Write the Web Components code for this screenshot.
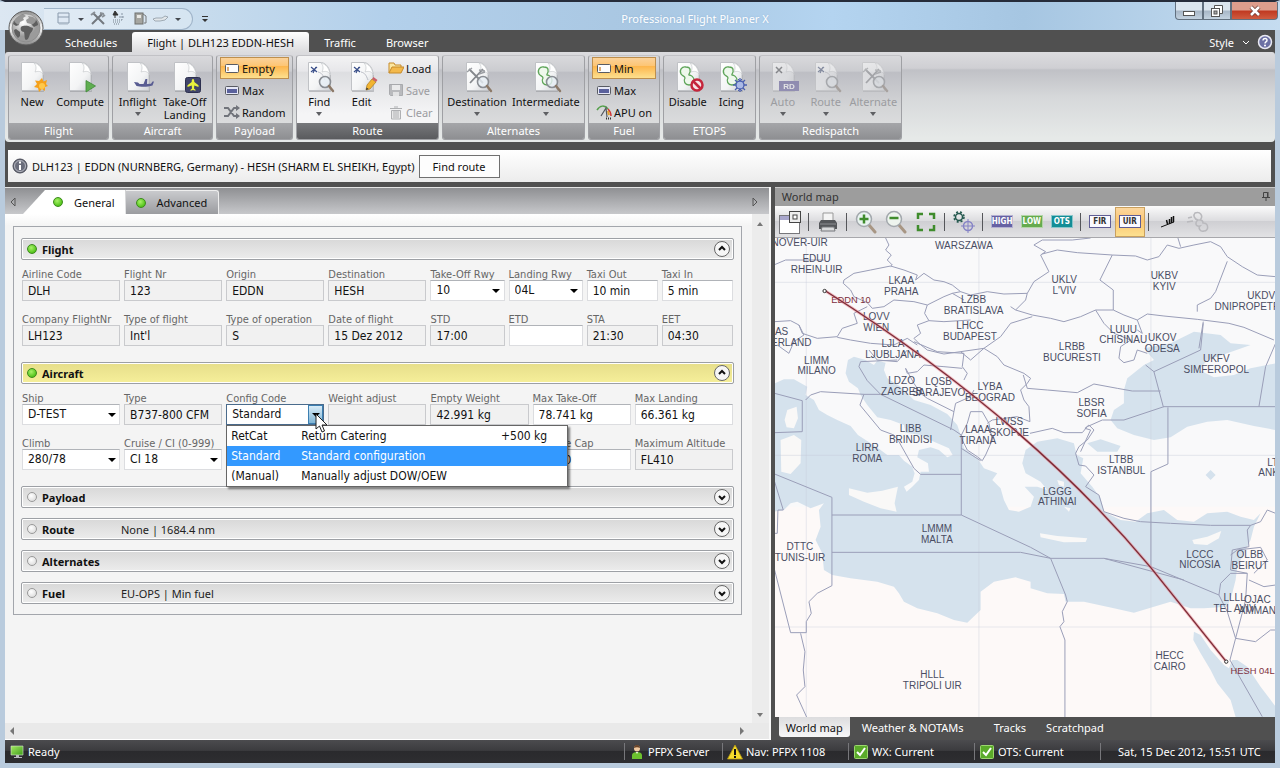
<!DOCTYPE html>
<html lang="en">
<head>
<meta charset="utf-8">
<title>Professional Flight Planner X</title>
<style>
    html, body { height: 100%; margin: 0; }
    body {
        font: 11px/13px "Noto Sans", "Open Sans", sans-serif;
        color: #111;
        background: #505050;
        overflow: hidden;
        --form-font: "DejaVu Sans Condensed", "DejaVu Sans", sans-serif;
        --dark: #505050;
    }
    ribbon-group.w-s { width: 77px; }
    ribbon-group.w-m { width: 101px; }
    ribbon-group.w-l { width: 143px; }
</style>
</head>
<body>
<planner-window>
    <title-bar slot="title">Professional Flight Planner X</title-bar>
    <ribbon-tabs slot="tabs"></ribbon-tabs>

    <ribbon-bar slot="ribbon">
        <ribbon-group class="w-m" caption="Flight">
            <ribbon-button large icon="new">New</ribbon-button>
            <ribbon-button large icon="compute">Compute</ribbon-button>
        </ribbon-group>
        <ribbon-group class="w-m" caption="Aircraft">
            <ribbon-button large menu icon="inflight">Inflight</ribbon-button>
            <ribbon-button large icon="takeoff">Take-Off<br>Landing</ribbon-button>
        </ribbon-group>
        <ribbon-group class="w-s" caption="Payload" stacked>
            <ribbon-button active icon="empty">Empty</ribbon-button>
            <ribbon-button icon="max">Max</ribbon-button>
            <ribbon-button icon="random">Random</ribbon-button>
        </ribbon-group>
        <ribbon-group class="w-l" caption="Route" current>
            <ribbon-button large menu icon="find">Find</ribbon-button>
            <ribbon-button large icon="edit">Edit</ribbon-button>
            <div>
                <ribbon-button icon="load">Load</ribbon-button>
                <ribbon-button disabled icon="save">Save</ribbon-button>
                <ribbon-button disabled icon="clear">Clear</ribbon-button>
            </div>
        </ribbon-group>
        <ribbon-group class="w-l" caption="Alternates">
            <ribbon-button large menu icon="destination">Destination</ribbon-button>
            <ribbon-button large menu icon="intermediate">Intermediate</ribbon-button>
        </ribbon-group>
        <ribbon-group style="width: 72px" caption="Fuel" stacked>
            <ribbon-button active icon="empty">Min</ribbon-button>
            <ribbon-button icon="max">Max</ribbon-button>
            <ribbon-button icon="apu">APU on</ribbon-button>
        </ribbon-group>
        <ribbon-group style="width: 93px" caption="ETOPS">
            <ribbon-button large icon="disable">Disable</ribbon-button>
            <ribbon-button large icon="icing">Icing</ribbon-button>
        </ribbon-group>
        <ribbon-group class="w-l" caption="Redispatch">
            <ribbon-button large menu disabled icon="auto">Auto</ribbon-button>
            <ribbon-button large menu disabled icon="find">Route</ribbon-button>
            <ribbon-button large menu disabled icon="destination">Alternate</ribbon-button>
        </ribbon-group>
    </ribbon-bar>

    <route-bar slot="info">DLH123 | EDDN (NURNBERG, Germany) - HESH (SHARM EL SHEIKH, Egypt)</route-bar>

    <planner-pane slot="planner">
        <form-section heading="Flight" complete open columns="98fr 98fr 98fr 98fr 74fr 74fr 71fr 71fr">
            <form-field label="Airline Code" value="DLH" readonly></form-field>
            <form-field label="Flight Nr" value="123" readonly></form-field>
            <form-field label="Origin" value="EDDN" readonly></form-field>
            <form-field label="Destination" value="HESH" readonly></form-field>
            <form-field label="Take-Off Rwy" value="10" select></form-field>
            <form-field label="Landing Rwy" value="04L" select></form-field>
            <form-field label="Taxi Out" value="10 min"></form-field>
            <form-field label="Taxi In" value="5 min"></form-field>
            <form-field label="Company FlightNr" value="LH123" readonly></form-field>
            <form-field label="Type of flight" value="Int'l" readonly></form-field>
            <form-field label="Type of operation" value="S" readonly></form-field>
            <form-field label="Date of flight" value="15 Dez 2012" readonly></form-field>
            <form-field label="STD" value="17:00" readonly></form-field>
            <form-field label="ETD" value=""></form-field>
            <form-field label="STA" value="21:30" readonly></form-field>
            <form-field label="EET" value="04:30" readonly></form-field>
        </form-section>
        <form-section heading="Aircraft" complete open current columns="repeat(7, 1fr)">
            <form-field label="Ship" value="D-TEST" select></form-field>
            <form-field label="Type" value="B737-800 CFM" readonly></form-field>
            <form-field label="Config Code" value="Standard" select expanded>
                <config-menu></config-menu>
            </form-field>
            <form-field label="Weight adjust" value="" readonly></form-field>
            <form-field label="Empty Weight" value="42.991 kg" readonly></form-field>
            <form-field label="Max Take-Off" value="78.741 kg"></form-field>
            <form-field label="Max Landing" value="66.361 kg"></form-field>
            <form-field label="Climb" value="280/78" select></form-field>
            <form-field label="Cruise / CI (0-999)" value="CI 18" select></form-field>
            <form-field style="grid-column: 6" label="Altitude Cap" value="FL410"></form-field>
            <form-field label="Maximum Altitude" value="FL410" readonly></form-field>
        </form-section>
        <form-section heading="Payload"></form-section>
        <form-section heading="Route" summary="None | 1684.4 nm"></form-section>
        <form-section heading="Alternates"></form-section>
        <form-section heading="Fuel" summary="EU-OPS | Min fuel"></form-section>
    </planner-pane>

    <map-pane slot="map">
        <map-toolbar></map-toolbar>
        <world-map></world-map>
    </map-pane>

    <status-bar slot="status">
        <status-item icon="monitor" class="grow">Ready</status-item>
        <status-item icon="person" divided style="width: 98px">PFPX Server</status-item>
        <status-item icon="warning" divided style="width: 126px">Nav: PFPX 1108</status-item>
        <status-item icon="check" divided style="width: 126px">WX: Current</status-item>
        <status-item icon="check" divided style="width: 126px">OTS: Current</status-item>
        <status-item divided style="width: 175px">Sat, 15 Dec 2012, 15:51 UTC</status-item>
    </status-bar>
</planner-window>

<script>
/* Shared pieces of the 32x32 ribbon icons. */
const PAGE = `
    <defs><linearGradient id="pg" x1="0" y1="0" x2="1" y2="1">
        <stop offset="0" stop-color="#fff"/><stop offset=".6" stop-color="#f3f4f5"/><stop offset="1" stop-color="#cfd2d6"/>
    </linearGradient></defs>
    <path d="M6 30.500h21.500V14" fill="none" stroke="#8d8f93" opacity=".5"/>
    <path d="M5.500 1.500h13c5 1 8.500 6 8.500 12v16H5.500z" fill="url(#pg)" stroke="#c0c2c6"/>
    <path d="M18 2c3 3 2 7 1 9 3-1 6-1 8 2-1-6-4-10-9-11z" fill="#fff" stroke="#c6c8cc" stroke-width=".7"/>`;
const LENS = `
    <circle cx="22" cy="21" r="5.500" fill="#e8f0f6" fill-opacity=".8" stroke="#8a8e94" stroke-width="1.600"/>
    <path d="M26 25l4 5" stroke="#8c7968" stroke-width="2.500" stroke-linecap="round"/>`;
const ROUTE = `<path d="M8 6l6 5M8 11l6-5M10 12l3-6" stroke="#3a4f8a" stroke-width="1.200"/>
    <path d="M15 11c4 1 5 3 7 8" fill="none" stroke="#b9bcc4"/>`;
const TOOLS = `<path d="M8 8l14 14M9 22L22 8" stroke="#85888d" stroke-width="1.800"/>
    <path d="M6 11l5-4M18 9l6 1M18 13l6-2" stroke="#9b9ea3" stroke-width="1.500"/>`;
const RINGS = `<path d="M14 6c-4-1-7 3-5 7 1 2 4 2 4 4-2 3 0 7 4 7 3 0 5-2 5-5s-3-5-5-5c-1-1 2-2 1-5 0-2-2-3-4-3z"
    fill="#eef8ec" stroke="#5fa55a" stroke-width="1.300"/>`;

const ICONS = {
    new: [32, PAGE + `<path d="M26 17l1.500 3.500L31 19l-1 4 2 2-3 1 0 4-3-2-3 3-1-4-4-1 3-3-2-3.500 4 .5z" fill="#f5a11c"/><circle cx="26" cy="25" r="3" fill="#ffc94a"/>`],
    compute: [32, PAGE + `<path d="M22 19.500l9.500 5.500-9.500 6z" fill="#5fae50" stroke="#3f8a38" stroke-width=".8"/>`],
    inflight: [32, PAGE + `<path d="M12 21l4 .5 1.500 1.500h4l2-5h1.800l-.3 5 4-.2 1.500-2.300H32l-1.500 4c-5 1.700-12 1.500-16 .5z" fill="#585c92"/>`],
    takeoff: [32, PAGE + `<rect x="16.500" y="16.500" width="15" height="15" rx="2" fill="#41456a" stroke="#2d304f"/>
        <path d="M24 18c1 0 1.300 1 1.300 3l4.200 3.300v1.700l-4.200-1.400-.3 3 1.500 1.200v1L24 29l-2.500.8v-1l1.500-1.200-.3-3L18.500 26v-1.700l4.200-3.300c0-2 .3-3 1.300-3z" fill="#e9f23c"/>`],
    find: [32, PAGE + ROUTE + LENS],
    edit: [32, PAGE + ROUTE + `<path d="M20 29l1-5 5-6 4 3-6 7z" fill="#f2b430" stroke="#a87a20" stroke-width=".7"/><path d="M26 18l4 3 1.500-2-4-3z" fill="#c9606a"/><path d="M20 29l.6-2.500 2 1.500z" fill="#333"/>`],
    destination: [32, PAGE + TOOLS + LENS],
    intermediate: [32, PAGE + RINGS + LENS],
    disable: [32, PAGE + RINGS + `<circle cx="25" cy="24" r="5.500" fill="#f6e4e6" stroke="#c5263c" stroke-width="2.500"/><path d="M21 20l8 8" stroke="#c5263c" stroke-width="2.500"/>`],
    icing: [32, PAGE + RINGS + `<path d="M25 17v14M18 24h14M20 19l10 10M30 19L20 29" stroke="#4a5fae" stroke-width="1.300"/><circle cx="25" cy="24" r="4" fill="#aab9e6" stroke="#4a5fae" stroke-width="1.300"/><path d="M23 18l2 2 2-2M23 30l2-2 2 2" fill="none" stroke="#4a5fae"/>`],
    auto: [32, PAGE + `<path d="M9 6l6 6M15 6l-6 6" stroke="#44474d" stroke-width="1.500"/><rect x="12" y="20" width="20" height="10" fill="#5d50c0"/><text x="22" y="28" font-size="8" font-weight="bold" font-family="Liberation Sans, sans-serif" text-anchor="middle" fill="#fff">RD</text>`],
    empty: [16, `<rect x="1.500" y="4.500" width="13" height="8" rx="1" fill="#fdfdfd" stroke="#585b62"/><path d="M4 7v4" stroke="#d09048" stroke-width="1.500"/>`],
    max: [16, `<rect x="1.500" y="4.500" width="13" height="8" rx="1" fill="#e6e8f6" stroke="#585b62"/><rect x="3" y="7" width="10" height="4" fill="#5a619c"/>`],
    random: [16, `<path d="M0 4h4l6 8h3M0 12h4l6-8h3" fill="none" stroke="#71747b" stroke-width="2"/><path d="M12 1l4 3-4 3zM12 9l4 3-4 3z" fill="#71747b"/>`],
    apu: [16, `<path d="M1 6c3-5 8-5 11-1" fill="none" stroke="#55a04c" stroke-width="1.500"/><path d="M12 5c2 2 3 4 3 7" fill="none" stroke="#d03838" stroke-width="1.500"/><path d="M5 12l5-8 1 9" fill="none" stroke="#55585e" stroke-width="1.200"/><path d="M12 7l1 4" stroke="#e0a030" stroke-width="2"/><path d="M10 14.500h5" stroke="#333" stroke-dasharray="1 1" stroke-width="2"/>`],
    load: [16, `<path d="M1 13V3h5l1 2h6v2" fill="#fbe7a2" stroke="#c68b2b"/><path d="M1 13L4 7h12l-3 6z" fill="#f3b94c" stroke="#c68b2b"/>`],
    save: [16, `<path d="M1.500 2.500h13v11h-12l-1-1z" fill="#8a8d94" stroke="#6b6e75"/><rect x="4" y="3" width="8" height="5" fill="#eee"/><rect x="5" y="10" width="6" height="4" fill="#ddd"/>`],
    clear: [16, `<path d="M2 4.500h12M6 3h4M3.500 6.500h9V15h-9z" fill="#ddd" stroke="#6b6e75"/><path d="M6 7v7M8 7v7M10 7v7" stroke="#6b6e75"/>`],
    globe: [36, `<defs><radialGradient id="g" cx=".4" cy=".3"><stop offset="0" stop-color="#fff"/><stop offset="1" stop-color="#9b9b9b"/></radialGradient>
        <linearGradient id="rim" x2="0" y2="1"><stop offset="0" stop-color="#8f8f8f"/><stop offset=".5" stop-color="#f8f8f8"/><stop offset="1" stop-color="#8a8a8a"/></linearGradient></defs>
        <circle cx="18" cy="18" r="17" fill="url(#rim)" stroke="#5b5b5b"/><circle cx="18" cy="18" r="14" fill="url(#g)" stroke="#8e8e8e"/>
        <path d="M6 11c2-4 5-6 9-7l3 2-3 2 1 2-4 2-1 3-3 1-3-2zM13 17c2-2 7-2 9 0l3 1c0 3-2 4-3 6-1 3-2 6-4 6-2-1-1-5-2-8-3 0-4-3-3-5zM20 6l5 1c3 2 5 5 5 8l-4 2-3-3-4-1-1-3 3-2zM8 19l4 3 0 4-2 2c-2-2-4-5-4-8z" fill="#5e5e5e"/>
        <ellipse cx="17" cy="10" rx="11" ry="6" fill="#fff" opacity=".35"/>`],
    disk: [16, `<path d="M2 3h11v10H2zM2 7h11" fill="#dfe9f4" stroke="#8b9bad"/><path d="M3 14h9" stroke="#a9b6c4"/>`],
    tools: [16, `<path d="M3 3l11 11M2 14L12 4" stroke="#74797f" stroke-width="2"/><path d="M1 5l4-3M10 3l4 1M12 7l3-2" stroke="#8a9097" stroke-width="2"/>`],
    spray: [16, `<path d="M4 1l3 4H2zM4 5v3" fill="#333" stroke="#333"/><path d="M2 10h9M2 12h8M3 14h6" stroke="#75808c" stroke-dasharray="1 1"/><path d="M11 3v7M8 7h6" stroke="#8795a4" stroke-dasharray="2 1"/>`],
    pump: [16, `<rect x="3" y="3" width="8" height="11" fill="#a5a5a0" stroke="#6f716e"/><rect x="5" y="5" width="4" height="3" fill="#e8e8e4"/><path d="M11 4l3 2v7h-2" fill="none" stroke="#77797a"/>`],
    plane: [16, `<path d="M0 9l3-1 6 0 3-2 3 1-3 3-5 1H2z" fill="#e1e6ea" stroke="#8f9aa5" stroke-width=".8"/>`],
    help: [16, `<circle cx="8" cy="8" r="6.500" fill="#6c70a4" stroke="#e9e9f3" stroke-width="1.500"/><path d="M6 6.500c0-3 4.500-2.500 4 0-.3 1.500-2 1.400-2 3" fill="none" stroke="#fff" stroke-width="1.400"/><circle cx="8" cy="11.500" r="1" fill="#fff"/>`],
    info: [16, `<circle cx="8" cy="8" r="7" fill="#6a6d7b" stroke="#4a4c57"/><circle cx="8" cy="8" r="5.500" fill="none" stroke="#c9cad2" stroke-width=".8"/><path d="M8 7v5M8 3.500v2" stroke="#fff" stroke-width="2"/>`],
    layout: [24, `<rect x="1.500" y="5.500" width="20" height="18" fill="#fff" stroke="#77777b"/><path d="M2 6h10v4H2z" fill="#a8a6cc"/><rect x="11.500" y="1.500" width="11" height="11" fill="#eee" stroke="#444"/><rect x="15" y="5" width="4" height="4" fill="#fff" stroke="#444"/>`],
    printer: [24, `<path d="M7 3h10v8H7z" fill="#f4f4f4" stroke="#999"/><path d="M5 10h14l2 3v6H3v-6z" fill="#55575b"/><path d="M4 14h16" stroke="#8d8f93"/><path d="M6 17h12l1 4H5z" fill="#d9dadc" stroke="#77797c"/>`],
    zoomin: [24, `<path d="M15 15l6 7" stroke="#a89684" stroke-width="3" stroke-linecap="round"/><circle cx="10" cy="9" r="7.500" fill="#e9f3f0" stroke="#a3a8ad" stroke-width="1.500"/><path d="M10 4.500v9M5.500 9h9" stroke="#3f8c2c" stroke-width="2.500"/>`],
    zoomout: [24, `<path d="M15 15l6 7" stroke="#a89684" stroke-width="3" stroke-linecap="round"/><circle cx="10" cy="9" r="7.500" fill="#eef4ee" stroke="#a3a8ad" stroke-width="1.500"/><path d="M5.500 8h9" stroke="#3f8c2c" stroke-width="2.500"/>`],
    expand: [24, `<path d="M4 9V4h5M15 4h5v5M20 15v5h-5M9 20H4v-5" fill="none" stroke="#3f8c2c" stroke-width="2.500"/>`],
    target: [24, `<circle cx="7" cy="7" r="3.500" fill="none" stroke="#24584e" stroke-width="1.500"/><circle cx="7" cy="7" r="5" fill="none" stroke="#24584e" stroke-width="1.500" stroke-dasharray="2 2"/><circle cx="16" cy="16" r="4.500" fill="none" stroke="#8583c6" stroke-width="1.500"/><path d="M16 9v14M9 16h14" stroke="#8583c6"/>`],
    wind: [24, `<path d="M5 17l13-5" stroke="#111"/><path d="M17.500 12V6M15.500 13V7M13.500 14V9M11.500 14l-1-4" stroke="#111" stroke-width="1.500"/>`],
    links: [24, `<path d="M9 3c5-2 9 3 5 7 2 0 3 1 3 3 6 0 6 8 1 8-4 1-6-3-4-5-5 1-5-4-2-6-4-1-5-5-3-7zM2 8l4-1M1 12l6-1" fill="none" stroke="#b9b9bd" stroke-width="1.500"/>`],
    monitor: [16, `<defs><linearGradient id="m" x2="1" y2="1"><stop offset="0" stop-color="#a4ea62"/><stop offset="1" stop-color="#3f9e1c"/></linearGradient></defs><path d="M2 2h12v9H2z" fill="url(#m)" stroke="#d7e6d0" stroke-width=".6"/><path d="M7 11h3v2h3v1H5v-1h2z" fill="#b9bcc0"/>`],
    person: [16, `<circle cx="8" cy="4.500" r="3" fill="#f0c9a0"/><path d="M5 4c0-4 6-4 6 0-2-1-4-1-6 0z" fill="#6b4428"/><path d="M3 15V11c0-4 10-4 10 0v4z" fill="#6cc02e"/><path d="M7 8h2l-1 2z" fill="#fff"/>`],
    warning: [16, `<path d="M8 1l7.500 14H.5z" fill="#f5dc2c" stroke="#b99a10" stroke-width=".8"/><path d="M8 5v6M8 12v2" stroke="#111" stroke-width="2"/>`],
    check: [16, `<rect x="1.500" y="1.500" width="13" height="13" rx="1" fill="#5aaa2a" stroke="#9bd66e"/><path d="M4 8l3 3 5-7" fill="none" stroke="#fff" stroke-width="2"/>`],
    pin: [12, `<path d="M3.500 2.500h4v5h-4zM2 7.500h8M6 8v3M8 2v5" fill="none" stroke="#444"/>`],
    chevron: [8, `<path d="M1 3l3 3 3-3" fill="none" stroke="#fff"/>`],
    down: [8, `<path d="M1 3h6L4 6z" fill="#44484f"/>`],
    more: [8, `<path d="M1 1.500h6" stroke="#333"/><path d="M1 4h6L4 7z" fill="#333"/>`],
};

/**
 * Base class: opens a shadow root and fills it with the element's template.
 */
class PlannerElement extends HTMLElement {
    constructor() {
        super();

        this.$shadowDom = this.attachShadow({ mode: 'open' });
    }

    connectedCallback() {
        const $template = document.createElement('template');

        $template.innerHTML = `<style>* { box-sizing: border-box; } button { font: inherit; color: inherit; border: 0; background: none; padding: 0; margin: 0; white-space: nowrap; }</style>${this.template()}`;
        this.$shadowDom.replaceChildren($template.content.cloneNode(true));
    }

    /**
     * Get an attribute's value.
     *
     * @param {string} name The name of the attribute.
     * @returns {string}
     */
    _attr(name) {
        return this.getAttribute(name) || '';
    }
}

class PlannerIcon extends PlannerElement {
    template() {
        const [ size, shapes ] = ICONS[this._attr('name')];

        return `<style>:host { display: inline-flex; flex: none; } svg { display: block; }</style>
            <svg width="${size}" height="${size}" viewBox="0 0 ${size} ${size}" aria-hidden="true">${shapes}</svg>`;
    }
}

class PlannerWindow extends PlannerElement {
    template() {
        return `
            <style>
                :host {
                    display: flex; flex-direction: column; height: 100vh; box-sizing: border-box;
                    border: solid #b9cbdd; border-width: 0 5px 5px 5px;
                    border-top: 2px solid #262c3a;
                    background: var(--dark);
                }
                main { flex: 1; min-height: 0; display: flex; gap: 4px; padding-top: 5px; }
                ::slotted([slot=planner]) { flex: 765 1 0; min-width: 0; }
                ::slotted([slot=map]) { flex: 501 1 0; min-width: 0; }
            </style>
            <slot name="title"></slot>
            <slot name="tabs"></slot>
            <slot name="ribbon"></slot>
            <slot name="info"></slot>
            <main><slot name="planner"></slot><slot name="map"></slot></main>
            <slot name="status"></slot>`;
    }
}

class TitleBar extends PlannerElement {
    template() {
        return `
            <style>
                :host {
                    position: relative; display: grid; grid-template-columns: 1fr auto 1fr; height: 28px;
                    margin: 0 -5px; color: #fff;
                    background: linear-gradient(90deg, #dce7f2, #c8dced 15%, #b3d0eb 30%, #a9c7e2 50%, #b4d4f0 65%, #a6c6e2 80%, #c5dcf0);
                }
                .globe { position: absolute; left: 8px; top: 8px; z-index: 2; }
                .left { display: flex; gap: 8px; align-items: center; padding-top: 5px; }
                .quick {
                    display: flex; align-items: center; gap: 5px;
                    height: 22px; margin-left: 44px; padding: 0 10px 0 12px;
                    border: 1px solid #9fb4c9; border-left: 0; border-radius: 0 11px 11px 0;
                    background: rgba(255, 255, 255, .25);
                }
                .title { padding: 9px 0 0 110px; line-height: 16px; text-shadow: 0 0 2px #8fb2d4; }
                .controls { display: flex; justify-self: end; margin-right: 2px; height: 18px; }
                .controls button {
                    width: 28px; display: grid; place-items: center; border: 1px solid #62707f; border-top: 0;
                    background: linear-gradient(#dbe5ee 45%, #a9b8c8 55%, #c3d2e0);
                }
                .controls .min { border-radius: 0 0 0 4px; }
                .controls .close { width: 47px; border-radius: 0 0 4px 0; background: linear-gradient(#dd9d8c 45%, #c13a22 55%, #cf5c40); }
            </style>
            <button class="globe" aria-label="Application menu"><planner-icon name="globe"></planner-icon></button>
            <div class="left">
                <div class="quick">
                    <button aria-label="Database"><planner-icon name="disk"></planner-icon></button>
                    <planner-icon name="down"></planner-icon>
                    <button aria-label="Tools"><planner-icon name="tools"></planner-icon></button>
                    <button aria-label="De-icing"><planner-icon name="spray"></planner-icon></button>
                    <button aria-label="Fuel"><planner-icon name="pump"></planner-icon></button>
                    <button aria-label="Aircraft"><planner-icon name="plane"></planner-icon></button>
                    <planner-icon name="down"></planner-icon>
                </div>
                <planner-icon name="more"></planner-icon>
            </div>
            <div class="title"><slot></slot></div>
            <div class="controls">
                <button class="min" aria-label="Minimize"><svg width="12" height="12"><rect x=".5" y="6.500" width="11" height="4" fill="#fff" stroke="#555"/></svg></button>
                <button aria-label="Restore"><svg width="12" height="12"><path d="M3.500 3V.5h8v8H9" fill="#fff" stroke="#555"/><rect x=".5" y="3.500" width="8" height="8" fill="#fff" stroke="#555"/><rect x="3" y="6" width="3" height="3" fill="#aaa" stroke="#555"/></svg></button>
                <button class="close" aria-label="Close"><svg width="12" height="12"><path d="M2 2l8 8M10 2l-8 8" stroke="#6b3c34" stroke-width="4"/><path d="M2 2l8 8M10 2l-8 8" stroke="#fff" stroke-width="2.500"/></svg></button>
            </div>`;
    }
}

class RibbonTabs extends PlannerElement {
    template() {
        return `
            <style>
                :host { display: flex; height: 22px; padding-left: 45px; color: #fff; align-items: flex-end; }
                button { height: 20px; padding: 0 15px; }
                .active { color: #111; background: linear-gradient(#fff, #dcdcde); border-radius: 3px 3px 0 0; }
                .style { margin-left: auto; padding: 0; display: flex; gap: 8px; align-items: center; }
                .help { padding: 0 2px 0 7px; }
                .help planner-icon { vertical-align: middle; }
            </style>
            <button>Schedules</button>
            <button class="active">Flight | DLH123 EDDN-HESH</button>
            <button>Traffic</button>
            <button>Browser</button>
            <button class="style">Style <planner-icon name="chevron"></planner-icon></button>
            <button class="help" aria-label="Help"><planner-icon name="help"></planner-icon></button>`;
    }
}

class RibbonBar extends PlannerElement {
    template() {
        return `
            <style>
                :host {
                    display: flex; gap: 3px; padding: 3px 3px 2px; height: 90px; box-sizing: border-box;
                    border-radius: 3px 3px 4px 4px;
                    background: linear-gradient(#dcdcdf, #cfcfd3 18%, #c0c1c6 20%, #d6d8da 50%, #e6e9e8 95%);
                }
            </style>
            <slot></slot>`;
    }
}

class RibbonGroup extends PlannerElement {
    template() {
        return `
            <style>
                :host {
                    display: flex; flex-direction: column; box-sizing: border-box; flex: none;
                    border: 1px solid #9fa0a4; border-top-color: #c2c2c6; border-radius: 3px; overflow: hidden;
                    background: linear-gradient(#d9d9dc, #cbccd0 18%, #bdbec4 20%, #d3d4d6 60%, #e1e3e3);
                }
                :host([current]) { background: linear-gradient(#f3f3f4, #e7e7ea 18%, #dddee1 20%, #f5f5f6 70%); }
                .body { flex: 1; min-height: 0; display: flex; padding-top: 1px; justify-content: space-evenly; align-items: flex-start; }
                :host([stacked]) .body { flex-direction: column; align-items: stretch; justify-content: flex-start; padding: 1px 3px 0; }
                .caption { height: 16px; line-height: 16px; text-align: center; color: #fff; background: linear-gradient(#a5a6a9, #8e8f92); }
                :host([current]) .caption { background: linear-gradient(#77787b, #5a5b5e); }
            </style>
            <div class="body"><slot></slot></div>
            <div class="caption">${this._attr('caption')}</div>`;
    }
}

class RibbonButton extends PlannerElement {
    template() {
        const disabled = this.hasAttribute('disabled') ? 'disabled' : '';
        const arrow = this.hasAttribute('menu') ? '<svg class="arrow" width="6" height="4"><path d="M0 0h6L3 4z"/></svg>' : '';

        return `
            <style>
                :host { display: block; }
                button { display: flex; align-items: center; gap: 2px; width: 100%; height: 22px; padding: 0 2px 0 3px; border: 1px solid transparent; }
                :host([large]) button { flex-direction: column; gap: 0; height: 66px; padding: 3px 0 0; min-width: 40px; }
                :host([active]) button { border-color: #bd8f4e; background: linear-gradient(#fbd29a, #fdc573 40%, #fdb64d 42%, #fde08f); }
                button:disabled { color: #9b9ca0; }
                button:disabled planner-icon { opacity: .5; filter: grayscale(.4); }
                .label { display: block; }
                :host([large]) .label { margin-top: 2px; }
                .arrow { margin-top: 4px; fill: #5e5f63; }
            </style>
            <button ${disabled}>
                <planner-icon name="${this._attr('icon')}"></planner-icon>
                <span class="label"><slot></slot></span>${arrow}
            </button>`;
    }
}

class RouteBar extends PlannerElement {
    template() {
        return `
            <style>
                :host {
                    display: flex; align-items: center; gap: 4px; height: 32px; margin: 8px 4px 0 3px; padding-left: 4px;
                    box-sizing: border-box; background: linear-gradient(#fff, #ececec);
                }
                button { height: 23px; padding: 0 13px; border: 1px solid #707070; background: #fdfdfd; }
            </style>
            <planner-icon name="info"></planner-icon>
            <slot></slot>
            <button>Find route</button>`;
    }
}

class PlannerPane extends PlannerElement {
    template() {
        return `
            <style>
                :host { display: flex; flex-direction: column; background: #f4f4f4; border-right: 2px solid #f8f8f8; box-sizing: border-box; }
                .tabs { flex: none; display: flex; align-items: flex-end; height: 27px; background: linear-gradient(#8f9093, #c7c8cb); border-top: 1px solid #e4e4e4; }
                .tabs button { display: flex; align-items: center; gap: 11px; height: 24px; padding: 0 11px 0 10px; }
                .tabs .scroll { width: 18px; padding: 0 5px; }
                .tabs .active { background: #fff; padding-left: 30px; clip-path: polygon(0 100%, 22px 0, 100% 0, 100% 100%); }
                .tabs .other { background: linear-gradient(#c9cacd, #9b9ca0); border: 1px solid #eee; border-width: 1px 1px 0 0; border-radius: 0 3px 0 0; }
                .tabs .next { margin-left: auto; width: 22px; }
                i { width: 10px; height: 10px; border-radius: 50%; border: 1px solid #3b8a1c; background: radial-gradient(circle at 40% 35%, #a8f268, #55c41d 70%); }
                .view { flex: 1; min-height: 0; display: flex; background: linear-gradient(#fff, #f4f4f4 12px); }
                .scrolled { flex: 1; overflow: hidden; }
                .panel { margin: 12px 10px 0 8px; padding: 11px 7px 10px; border: 1px solid #a3a6ac; display: grid; gap: 10px; }
                .vbar { width: 17px; display: flex; flex-direction: column; justify-content: space-between; align-items: center; padding: 8px 0 6px; background: #ececec; }
                .hbar { flex: none; height: 17px; display: flex; justify-content: space-between; align-items: center; padding: 0 25px 0 5px; background: #e9e9e9; border-bottom: 1px solid #fff; }
                .vbar button, .hbar button { display: flex; }
            </style>
            <div class="tabs" role="tablist">
                <button class="scroll" aria-label="Scroll tabs left"><svg width="6" height="10"><path d="M5 1v8L1 5z" fill="none" stroke="#555"/></svg></button>
                <button class="active" role="tab"><i></i>General</button>
                <button class="other" role="tab"><i></i>Advanced</button>
                <button class="scroll next" aria-label="Scroll tabs right"><svg width="6" height="10"><path d="M1 1v8l4-4z" fill="none" stroke="#555"/></svg></button>
            </div>
            <div class="view">
                <div class="scrolled"><div class="panel"><slot></slot></div></div>
                <div class="vbar">
                    <button aria-label="Scroll up"><svg width="6" height="4"><path d="M0 4h6L3 0z" fill="#777"/></svg></button>
                    <button aria-label="Scroll down"><svg width="6" height="4"><path d="M0 0h6L3 4z" fill="#777"/></svg></button>
                </div>
            </div>
            <div class="hbar">
                <button aria-label="Scroll left"><svg width="4" height="8"><path d="M4 0v8L0 4z" fill="#777"/></svg></button>
                <button aria-label="Scroll right"><svg width="4" height="8"><path d="M0 0v8l4-4z" fill="#777"/></svg></button>
            </div>`;
    }
}

class FormSection extends PlannerElement {
    template() {
        return `
            <style>
                :host { display: block; }
                .bar {
                    display: flex; align-items: center; width: 100%; height: 22px; padding: 0 3px 0 5px; text-align: left; color: #222;
                    border: 1px solid #9da0a5; box-shadow: inset 0 0 0 1px #fff; border-radius: 2px;
                    background: linear-gradient(#d8d8d8, #ececec);
                }
                :host([current]) .bar { background: linear-gradient(#e6de8a, #f6ef9a); }
                i { width: 10px; height: 10px; margin-right: 5px; border-radius: 50%; border: 1px solid #999; background: radial-gradient(circle at 40% 35%, #fff, #ddd 80%); }
                :host([complete]) i { border-color: #3b8a1c; background: radial-gradient(circle at 40% 35%, #a8f268, #55c41d 70%); }
                b { width: 79px; color: #111; }
                svg { margin-left: auto; }
                .fields { display: grid; grid-template-columns: ${this._attr('columns') || 'none'}; gap: 12px 4px; padding: 8px 1px 6px; }
                :host(:not([open])) .fields { display: none; }
                :host([open]) svg path { transform: rotate(180deg); transform-origin: 8px 8px; }
            </style>
            <button class="bar" aria-expanded="${this.hasAttribute('open')}">
                <i></i><b>${this._attr('heading')}</b><span>${this._attr('summary')}</span>
                <svg width="16" height="16"><circle cx="8" cy="8" r="7.500" fill="#f6f6f6" stroke="#666"/><path d="M5 7l3 3 3-3" fill="none" stroke="#111" stroke-width="2"/></svg>
            </button>
            <div class="fields"><slot></slot></div>`;
    }
}

class FormField extends PlannerElement {
    template() {
        const value = this._attr('value');
        const control = this.hasAttribute('select')
            ? `<select id="control"><option>${value}</option></select><span class="drop"><svg width="8" height="4"><path d="M0 0h8L4 4z"/></svg></span>`
            : `<input id="control" value="${value}" ${this.hasAttribute('readonly') ? 'readonly' : ''}>`;

        return `
            <style>
                :host { display: block; position: relative; min-width: 0; font-family: var(--form-font); }
                label { display: block; height: 12px; font-size: 11px; line-height: 14px; color: #666; white-space: nowrap; }
                .box { position: relative; height: 21px; }
                input, select {
                    display: block; width: 100%; height: 21px; margin: 0; padding: 0 0 0 5px; outline: 0;
                    font: 12px/19px var(--form-font); color: #111; appearance: none; border-radius: 0;
                    border: 1px solid #dcdde0; border-top-color: #b0b3b8; background: #fff;
                }
                input[readonly] { background: #f1f1f1; border-color: #c9cacd; }
                .drop { position: absolute; inset: 1px 1px 1px auto; width: 15px; display: grid; place-items: center; pointer-events: none; }
                :host([expanded]) select { border-color: #4a6b8c; }
                :host([expanded]) .drop { border: 1px solid #3c7fb1; background: linear-gradient(#d8ecf8, #7fb4d4); }
            </style>
            <label for="control">${this._attr('label')}</label>
            <div class="box">${control}</div>
            <slot></slot>`;
    }
}

class ConfigMenu extends PlannerElement {
    template() {
        return `
            <style>
                :host { display: block; }
                ul {
                    position: absolute; top: 33px; left: 0; z-index: 5; width: 342px; margin: 0; padding: 0; list-style: none;
                    font: 12px/20px var(--form-font); background: #fff; border: 1px solid #666; box-shadow: 2px 2px 2px rgba(0, 0, 0, .5);
                }
                li { display: grid; grid-template-columns: 70px 1fr auto; padding: 0 20px 0 4px; }
                li[aria-selected=true] { color: #fff; background: #3399ff; }
                svg { position: absolute; left: 89px; top: 21px; z-index: 6; }
            </style>
            <ul role="listbox" aria-label="Config Code">
                <li role="option"><span>RetCat</span><span>Return Catering</span><span>+500 kg</span></li>
                <li role="option" aria-selected="true"><span>Standard</span><span>Standard configuration</span></li>
                <li role="option"><span>(Manual)</span><span>Manually adjust DOW/OEW</span></li>
            </ul>
            <svg width="13" height="20" aria-hidden="true"><path d="M1 1v15l3.500-3 2.500 6 2.500-1-2.500-6H12z" fill="#fff" stroke="#222"/></svg>`;
    }
}

class MapPane extends PlannerElement {
    template() {
        return `
            <style>
                :host { display: flex; flex-direction: column; }
                header { display: flex; flex: none; justify-content: space-between; align-items: center; height: 19px; padding: 0 3px 2px 7px; color: #333; background: #9d9d9d; border-top: 1px solid #c9c9c9; }
                slot { flex: 1; min-height: 0; display: flex; flex-direction: column; }
                nav { display: flex; flex: none; height: 23px; color: #fff; padding-left: 4px; align-items: flex-start; }
                nav button { height: 20px; padding: 0 7px; margin-right: 5px; }
                nav button:nth-child(n+2) { margin-right: 16px; }
                nav button:nth-child(n+3) { margin-right: 6px; }
                nav .active { color: #111; background: linear-gradient(#dcdcde, #f8f8f8); border-radius: 0 0 3px 3px; }
            </style>
            <header>World map <planner-icon name="pin"></planner-icon></header>
            <slot></slot>
            <nav>
                <button class="active">World map</button>
                <button>Weather &amp; NOTAMs</button>
                <button>Tracks</button>
                <button>Scratchpad</button>
            </nav>`;
    }
}

class MapToolbar extends PlannerElement {
    template() {
        const tool = (name, label) => `<button aria-label="${label}"><planner-icon name="${name}"></planner-icon></button>`;
        const layer = (name, extra) => `<button class="layer ${extra}"><span>${name}</span></button>`;

        return `
            <style>
                :host { display: flex; flex: none; align-items: center; height: 32px; box-sizing: border-box; background: linear-gradient(#fbfbfb, #dcdcdf 48%, #cfcfd3 50%, #e2e2e4); border-bottom: 1px solid #a8a8ac; }
                button { flex: none; width: 30px; height: 30px; display: grid; place-items: center; }
                hr { flex: none; width: 1px; height: 18px; margin: 0 4px 0 3px; border: 0; background: #55565a; }
                .layer span { width: 22px; height: 13px; font: bold 8px/11px "DejaVu Sans Condensed", sans-serif; color: #fff; border: 1px solid rgba(255, 255, 255, .5); background: #6661a3; }
                .low span { background: #65ab4f; }
                .ots span { background: #138d96; }
                .outline span { color: #333; border-color: #5f5d95; background: #fafaff; }
                .active { background: linear-gradient(#fcd79f, #fcc672 48%, #fce08f); border: 1px solid #c9a05e; }
            </style>
            ${tool('layout', 'Window layout')}<hr>${tool('printer', 'Print')}<hr>
            ${tool('zoomin', 'Zoom in')}${tool('zoomout', 'Zoom out')}${tool('expand', 'Fit')}<hr>
            ${tool('target', 'Map settings')}<hr>
            ${layer('HIGH', '')}${layer('LOW', 'low')}${layer('OTS', 'ots')}<hr>
            ${layer('FIR', 'outline')}${layer('UIR', 'outline active')}<hr>
            ${tool('wind', 'Winds')}${tool('links', 'ETOPS rings')}`;
    }
}

/* Region labels: centre x, middle of the first line, lines. */
const REGIONS = [
    [ 87, -294, 'NOVER-UIR' ], [ 138, -245, 'EDUU', 'RHEIN-UIR' ], [ 392, -178, 'LKAA', 'PRAHA' ],
    [ 580, -283, 'WARSZAWA' ], [ 609, -121, 'LZBB', 'BRATISLAVA' ], [ 598, -43, 'LHCC', 'BUDAPEST' ],
    [ 881, -181, 'UKLV', "L'VIV" ], [ 1181, -193, 'UKBV', 'KYIV' ], [ 1472, -133, 'UKDV', 'DNIPROPETROVSK' ],
    [ 317, -70, 'LOVV', 'WIEN' ], [ 367, 10, 'LJLA', 'LJUBLJANA' ], [ 33, -25, 'AS' ], [ 62, 7, 'ERLAND' ],
    [ 138, 60, 'LIMM', 'MILANO' ], [ 1058, -33, 'LUUU', 'CHISINAU' ], [ 1175, -8, 'UKOV', 'ODESA' ],
    [ 904, 20, 'LRBB', 'BUCURESTI' ], [ 1337, 56, 'UKFV', 'SIMFEROPOL' ], [ 393, 122, 'LDZO', 'ZAGREB' ],
    [ 504, 124, 'LQSB', 'SARAJEVO' ], [ 658, 140, 'LYBA', 'BEOGRAD' ], [ 716, 244, 'LWSS', 'SKOPJE' ],
    [ 622, 268, 'LAAA', 'TIRANA' ], [ 420, 265, 'LIBB', 'BRINDISI' ], [ 290, 323, 'LIRR', 'ROMA' ],
    [ 499, 566, 'LMMM', 'MALTA' ], [ 88, 620, 'DTTC', 'TUNIS-UIR' ], [ 963, 187, 'LBSR', 'SOFIA' ],
    [ 1052, 358, 'LTBB', 'ISTANBUL' ], [ 1525, 366, 'LTAA', 'ANKARA' ], [ 860, 453, 'LGGG', 'ATHINAI' ],
    [ 1288, 642, 'LCCC', 'NICOSIA' ], [ 1438, 643, 'OLBB', 'BEIRUT' ], [ 1392, 773, 'LLLL', 'TEL AVIV' ],
    [ 1460, 778, 'OJAC', 'AMMAN' ], [ 485, 1004, 'HLLL', 'TRIPOLI UIR' ], [ 1197, 947, 'HECC', 'CAIRO' ],
];

class WorldMap extends PlannerElement {
    template() {
        const labels = REGIONS.map(([ x, y, ...lines ]) => lines
            .map((line, index) => `<text x="${x}" y="${y + 11 + index * 32}">${line}</text>`)
            .join('')).join('');

        return `
            <style>
                :host { flex: 1; min-height: 0; display: block; background: #f8f8fa; overflow: hidden; }
                svg { display: block; width: 100%; height: 100%; }
                text { font: 30px "Liberation Sans", sans-serif; text-anchor: middle; fill: #4a4d63; }
                .airport text { font-size: 28px; text-anchor: start; fill: #7d3040; }
            </style>
            <svg viewBox="12 -306 1503 1437" preserveAspectRatio="xMidYMid slice" role="img" aria-label="Route from EDDN to HESH">
                <rect x="12" y="-306" width="1503" height="1437" fill="#f9f9fa"/>
                <path d="M12 500H1515V1131H12z" fill="#fdf9f8"/>
                <g fill="#d5e2ed">
                    <path d="M12 130L40 118 70 118 110 140 105 165 130 180 145 210 170 225 200 240 240 258 262 285 300 310 330 330 350 345 385 345 400 362 425 380 432 400 425 425 400 440 408 455 425 440 445 420 450 395 475 395 472 370 440 352 445 330 480 322 505 330 530 352 546 345 535 325 490 305 450 285 405 278 400 255 360 240 320 232 290 195 270 165 262 145 235 125 225 100 232 60 250 50 285 60 310 75 320 62 345 68 340 90 350 115 390 140 430 180 480 195 530 222 560 255 572 290 580 325 620 355 640 385 680 400 665 420 690 445 700 480 715 510 745 515 780 500 790 470 762 440 800 440 830 450 810 425 765 400 755 370 765 330 800 305 860 295 910 310 918 345 938 355 930 400 965 440 990 475 1000 515 1050 540 1095 545 1130 520 1180 510 1220 540 1270 545 1310 520 1370 515 1410 530 1450 540 1470 520 1450 560 1440 600 1400 680 1395 720 1385 760 1370 800 1300 805 1260 805 1200 785 1150 800 1090 818 1030 805 940 785 885 785 880 762 830 760 780 745 780 725 735 712 670 725 630 755 630 810 590 848 550 840 500 820 440 805 400 785 385 760 370 740 320 725 240 715 185 705 160 690 155 640 135 600 150 560 145 510 160 490 120 505 80 485 60 490 40 510 12 515z"/>
                    <path d="M1060 150L1070 115 1120 75 1150 60 1120 25 1200 10 1270-25 1350-15 1380 10 1440 15 1370 40 1310 60 1285 90 1330 112 1390 105 1440 85 1515 70V270L1450 258 1370 240 1310 245 1250 260 1200 292 1150 300 1090 285 1040 265 1020 240 1030 210 1060 190z"/>
                    <path d="M950 310L990 298 1050 318 1040 335 980 335zM1305 405L1320 390 1335 405 1320 420z"/>
                    <path d="M1270 875L1290 885 1320 930 1360 975 1375 985 1385 960 1400 960 1430 980 1470 1040 1515 1100V1131H1395L1380 1080 1340 1030 1320 990 1290 940 1268 900z"/>
                </g>
                <g fill="#f9f8f7">
                    <path d="M50 210L78 200 82 235 70 265 48 262 42 240zM30 300L70 285 92 300 90 370 60 402 32 395zM235 445L290 458 335 452 382 440 372 490 378 515 330 505 280 485 235 465z"/>
                    <path d="M808 580L860 588 950 595 945 606 880 607 810 592zM1265 600L1310 590 1352 573 1345 595 1310 615 1270 612zM860 420L880 425 880 440 865 435zM880 500L900 505 895 515z"/>
                </g>
                <path d="M107-306V1131M625-306V1131M1141-306V1131M12-173H1515M12 346H1515M12 861H1515" stroke="#c5cad8" stroke-width="2" stroke-opacity=".6"/>
                <g fill="none" stroke="#9a9eb8" stroke-width="3" stroke-linejoin="round">
                    <path d="M12-226L45-240H160M345-306L355-285 345-270 362-255 350-240 365-225 360-220M220-180L250-200 300-210 360-222 400-210 440-195 435-180 460-200 490-180 520-175 545-165 570-145 545-140 520-130 470-105 430-115 370-120 340-100 305-95 290-112 250-130 240-150 218-170zM570-145L600-135 650-145 700-138 770-140 765-120 735-90 720-100"/>
                    <path d="M545-140L580-120M770-140L790-175 835-205 810-255 825-265 790-285 815-300H905L960-306M815-258L860-270 920-262 1025-255 1095-252 1130-240 1165-250 1190-285 1225-275 1270-285 1320-295 1350-280 1370-250 1415-220 1460-195 1515-190M1222-306L1230-280M1025-255L988-180 1028-150V-90M1370-236L1335-145 1320-125 1280-105V-85M735-90L785-75 840-65 880-55 930-70 975-90 1028-90 1060-75 1100-60 1130-78 1180-72 1280-62 1375-50 1420-38 1510 0"/>
                    <path d="M1298-55L1285 25M1100-60L1115-20 1100-30M975-90L1000-50 1030-20 1080 0 1050 20 1045 55 1060 68 1090 60 1100 30 1130 40M470-105L462-80 475-58 520-55 600-60M475-58L440-45 450-20 430-5 445 10 470 30 520 42 570 35 640 25 690-10 720-50 785-70"/>
                    <path d="M12-55L60-58 85-45 95-20 140-5 200-10 215-35 260-50 250-80 290-100M85-45L100-15 70 5 55 40 20 15M200-8L240 0 300 10 370 15 410-5 440 15M295 30L320 60 380 65 410 30M430 5L500 35 580 40 575 80 590 100 580 120"/>
                    <path d="M570 35L600 60 640 25 680 50 700 75 760 100 780 115 770 130 750 150 760 180 775 200 778 245 740 230 700 235 665 240 650 250M405 85L410 100 440 95 460 75 520 80 575 85M405 85L430 130 450 160 470 175 550 215 540 270M550 215L555 190 600 170 610 150M600 215L635 215 655 250 665 300 645 345 635 362 620 350 590 330 570 290 590 250zM778 280L845 265 880 278 935 278 950 260 995 240"/>
                    <path d="M758 105L770 145 830 150 920 158 970 132 1040 145 1085 153H1170M995 240L1060 240 1180 200M1125 75L1150 95 1178 200H1515M1150 95L1290 30 1298-50M1465 200L1485 80 1515 10M1192 202V372L1141 395V680M930 335L960 270 943 265 955 255 970 270 950 300 925 320 915 340 925 375 945 378 970 405 945 440 985 465 1000 515 1060 535 1110 545 1200 550 1320 556H1440L1430 570 1435 620 1385 630 1380 690 1430 700M1440 556L1470 545 1490 510 1515 520M1380 645L1400 630 1470 622 1490 660 1450 700"/>
                    <path d="M12 160L95 182V275L12 278M105 180L120 165 150 155 280 163H330M330 163L290 122 265 80 270 65 380 60M330 163L550 270 572 285V525M280 163L268 195 330 270 370 285 385 305 430 385 450 403H572M572 325L630 362M12 402L184 472V737M184 525H572L780 622M184 637H750L840 655H1000L1141 680M780 622L840 655M840 655L885 765 890 785 875 815 880 845 868 860 883 900V1131M1141 680L1345 765 1370 815 1395 895 1378 960 1475 1130M1000 655L1240 720"/>
                    <path d="M12 425L38 510H22L20 580H12M12 690L60 878H107V845L122 820 115 785 140 760 184 737M90 880L103 935 98 990 103 1040 78 1065 108 1131M1430 700L1425 780 1395 895 1455 905 1500 870H1515M1345 765L1350 730 1380 700H1430M1435 720L1480 740 1515 735"/>
                </g>
                ${labels}
                <g class="airport">
                    <text x="182" y="-110">EDDN 10</text>
                    <text x="1380" y="1002">HESH 04L</text>
                </g>
                <g fill="none">
                    <path d="M165-147C500 65 850 335 1140 682L1367 965" stroke="#e88a94" stroke-opacity=".6" stroke-width="9"/>
                    <path d="M165-147C500 65 850 335 1140 682L1367 965" stroke="#7b2b36" stroke-width="4"/>
                    <circle cx="162" cy="-147" r="5" fill="#fff" stroke="#333" stroke-width="3"/>
                    <circle cx="1367" cy="965" r="5" fill="#fff" stroke="#333" stroke-width="3"/>
                </g>
            </svg>`;
    }
}

class StatusBar extends PlannerElement {
    template() {
        return `
            <style>
                :host { display: flex; flex: none; align-items: center; height: 23px; color: #fff; background: linear-gradient(#4b4b4e, #3c3c3f 45%, #2a2a2d 50%, #2e2e31); }
                ::slotted(.grow) { flex: 1; }
            </style>
            <slot></slot>`;
    }
}

class StatusItem extends PlannerElement {
    template() {
        const icon = this._attr('icon') ? `<planner-icon name="${this._attr('icon')}"></planner-icon>` : '';

        return `
            <style>
                :host { display: flex; align-items: center; gap: 3px; height: 17px; padding-left: 4px; box-sizing: border-box; white-space: nowrap; }
                :host([divided]) { border-left: 1px solid #77777b; }
                :host([divided]:not([icon])) { padding-left: 17px; }
            </style>
            ${icon}<slot></slot>`;
    }
}

customElements.define('planner-icon', PlannerIcon);
customElements.define('planner-window', PlannerWindow);
customElements.define('title-bar', TitleBar);
customElements.define('ribbon-tabs', RibbonTabs);
customElements.define('ribbon-bar', RibbonBar);
customElements.define('ribbon-group', RibbonGroup);
customElements.define('ribbon-button', RibbonButton);
customElements.define('route-bar', RouteBar);
customElements.define('planner-pane', PlannerPane);
customElements.define('form-section', FormSection);
customElements.define('form-field', FormField);
customElements.define('config-menu', ConfigMenu);
customElements.define('map-pane', MapPane);
customElements.define('map-toolbar', MapToolbar);
customElements.define('world-map', WorldMap);
customElements.define('status-bar', StatusBar);
customElements.define('status-item', StatusItem);
</script>
</body>
</html>
